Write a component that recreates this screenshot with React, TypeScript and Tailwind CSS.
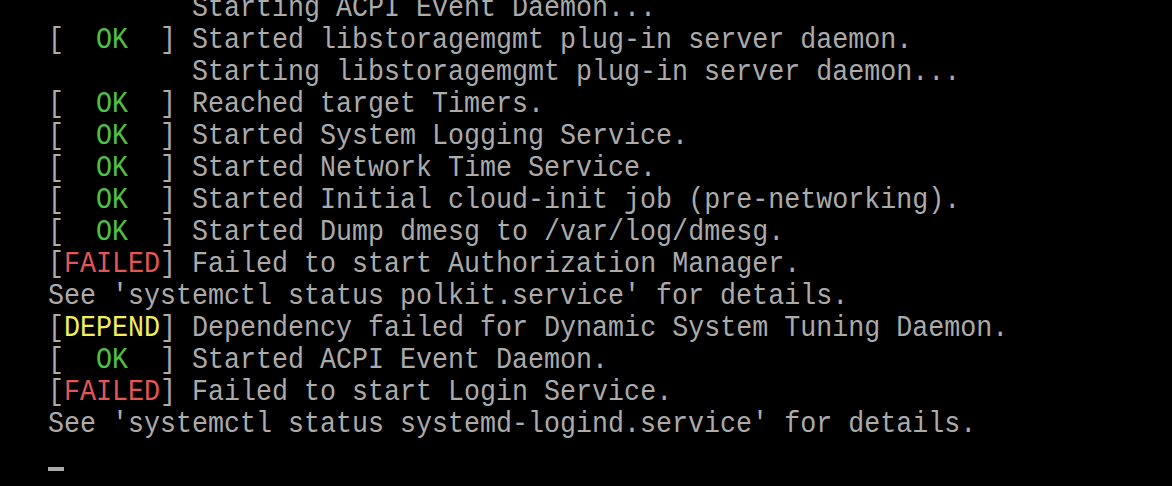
import React from "react";

type Seg = { t: string; c?: string };

const G = "text-[#ababab]";
const OK = "text-[#4fc23f]";
const RED = "text-[#e35656]";
const YEL = "text-[#f2ef5e]";

const lines: Seg[][] = [
  [{ t: "         Starting ACPI Event Daemon..." }],
  [{ t: "[  " }, { t: "OK", c: OK }, { t: "  ] Started libstoragemgmt plug-in server daemon." }],
  [{ t: "         Starting libstoragemgmt plug-in server daemon..." }],
  [{ t: "[  " }, { t: "OK", c: OK }, { t: "  ] Reached target Timers." }],
  [{ t: "[  " }, { t: "OK", c: OK }, { t: "  ] Started System Logging Service." }],
  [{ t: "[  " }, { t: "OK", c: OK }, { t: "  ] Started Network Time Service." }],
  [{ t: "[  " }, { t: "OK", c: OK }, { t: "  ] Started Initial cloud-init job (pre-networking)." }],
  [{ t: "[  " }, { t: "OK", c: OK }, { t: "  ] Started Dump dmesg to /var/log/dmesg." }],
  [{ t: "[" }, { t: "FAILED", c: RED }, { t: "] Failed to start Authorization Manager." }],
  [{ t: "See 'systemctl status polkit.service' for details." }],
  [{ t: "[" }, { t: "DEPEND", c: YEL }, { t: "] Dependency failed for Dynamic System Tuning Daemon." }],
  [{ t: "[  " }, { t: "OK", c: OK }, { t: "  ] Started ACPI Event Daemon." }],
  [{ t: "[" }, { t: "FAILED", c: RED }, { t: "] Failed to start Login Service." }],
  [{ t: "See 'systemctl status systemd-logind.service' for details." }],
];

export default function App() {
  return (
    <div className="w-[1172px] h-[486px] bg-black overflow-hidden">
      <div className="pl-[48px] -mt-[8px]">
        <div
          className={`origin-top-left scale-x-[0.8889] whitespace-pre text-[30px] leading-[32px] ${G}`}
          style={{ fontFamily: '"Liberation Mono", monospace' }}
        >
          {lines.map((l, i) => (
            <div key={i} className="h-[32px]">
              {l.map((s, j) => (
                <span key={j} className={s.c}>
                  {s.t}
                </span>
              ))}
            </div>
          ))}
          <div className="h-[32px] flex items-end pb-[1px]">
            <div className="w-[18px] h-[4px] bg-[#ababab]" />
          </div>
        </div>
      </div>
    </div>
  );
}
